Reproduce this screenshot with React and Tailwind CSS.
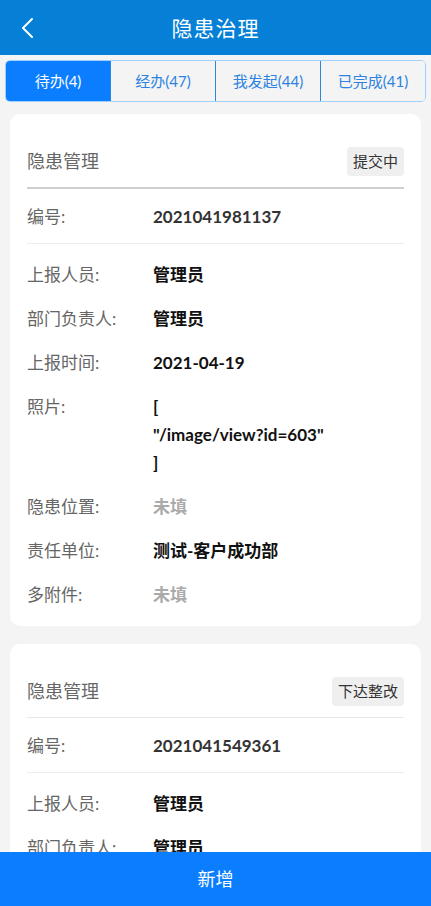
import { useState } from "react";

// Tabs across the top, each with its count
const TABS = [
  { id: "todo", label: "待办(4)" },
  { id: "handled", label: "经办(47)" },
  { id: "mine", label: "我发起(44)" },
  { id: "done", label: "已完成(41)" },
];

const CARDS = [
  {
    status: "提交中",
    thickDivider: true,
    code: "2021041981137",
    rows: [
      { label: "上报人员:", value: "管理员" },
      { label: "部门负责人:", value: "管理员" },
      { label: "上报时间:", value: "2021-04-19" },
      { label: "照片:", lines: ["[", "\"/image/view?id=603\"", "]"] },
      { label: "隐患位置:", value: "未填", empty: true },
      { label: "责任单位:", value: "测试-客户成功部" },
      { label: "多附件:", value: "未填", empty: true },
    ],
  },
  {
    status: "下达整改",
    thickDivider: false,
    code: "2021041549361",
    rows: [
      { label: "上报人员:", value: "管理员" },
      { label: "部门负责人:", value: "管理员" },
      { label: "上报时间:", value: "2021-04-15" },
    ],
  },
];

function Row({ label, children }) {
  return (
    <div className="flex py-2">
      <div className="w-[126px] shrink-0 text-[17px] leading-[28px] text-[#666]">{label}</div>
      <div className="flex-1 text-[17px] leading-[28px] font-bold">{children}</div>
    </div>
  );
}

function Card({ card }) {
  return (
    <div className="bg-white rounded-[10px] px-[17px] pt-[33px] pb-[9px]">
      {/* card title + status badge */}
      <div
        className={`flex items-center justify-between pb-[11px] ${
          card.thickDivider ? "border-b-2 border-[#cfcfcf]" : "border-b border-[#e8e8e8]"
        }`}
      >
        <span className="text-[18px] text-[#666]">隐患管理</span>
        <span className="bg-[#efefef] rounded-[4px] px-[6px] h-[29px] flex items-center text-[15px] text-[#333]">
          {card.status}
        </span>
      </div>

      {/* serial number */}
      <div className="flex pt-[14px] pb-[12px] border-b border-[#ececec]">
        <div className="w-[126px] shrink-0 text-[17px] leading-[28px] text-[#666]">编号:</div>
        <div className="text-[17px] leading-[28px] font-bold text-[#333]">{card.code}</div>
      </div>

      <div className="pt-[9px]">
        {card.rows.map((r) => (
          <Row key={r.label} label={r.label}>
            {r.lines ? (
              r.lines.map((l, i) => (
                <div key={i} className="text-[#111]">
                  {l}
                </div>
              ))
            ) : (
              <span className={r.empty ? "text-[#aaa]" : "text-[#111]"}>{r.value}</span>
            )}
          </Row>
        ))}
      </div>
    </div>
  );
}

export default function App() {
  const [active, setActive] = useState("todo");

  return (
    <div
      className="h-[906px] bg-[#f4f4f4] flex flex-col overflow-hidden"
      style={{ fontFamily: 'Lato, "Noto Sans CJK SC", sans-serif' }}
    >
      {/* ── HEADER ── */}
      <header className="h-[55px] shrink-0 bg-[#0680d6] flex items-center relative">
        <button className="absolute left-[19px] top-[17px] w-[16px] h-[22px] flex items-center justify-center">
          <svg width="14" height="22" viewBox="0 0 14 22" fill="none">
            <path d="M12 2 L3 11 L12 20" stroke="white" strokeWidth="2" strokeLinecap="round" strokeLinejoin="round" />
          </svg>
        </button>
        <h1 className="flex-1 text-center text-white text-[21px] tracking-[1px]">隐患治理</h1>
      </header>

      {/* ── TABS ── */}
      <div className="px-[5px] pt-[5px] shrink-0">
        <div className="flex h-[42px] border border-[#9fd0ff] rounded-[5px] overflow-hidden">
          {TABS.map((t, i) => (
            <button
              key={t.id}
              onClick={() => setActive(t.id)}
              className={`flex-1 flex items-center justify-center text-[15px] ${
                i > 0 ? "border-l border-[#2a88e0]" : ""
              } ${active === t.id ? "bg-[#0a7eff] text-white" : "bg-[#f4f4f4] text-[#2b82e0]"}`}
            >
              {t.label}
            </button>
          ))}
        </div>
      </div>

      {/* ── LIST ── */}
      <main className="flex-1 overflow-hidden px-[10px] pt-[12px] flex flex-col gap-[18px]">
        {CARDS.map((c) => (
          <Card key={c.code} card={c} />
        ))}
      </main>

      {/* ── FOOTER ── */}
      <button className="h-[54px] shrink-0 bg-[#0a7eff] text-white text-[18px]">新增</button>
    </div>
  );
}
